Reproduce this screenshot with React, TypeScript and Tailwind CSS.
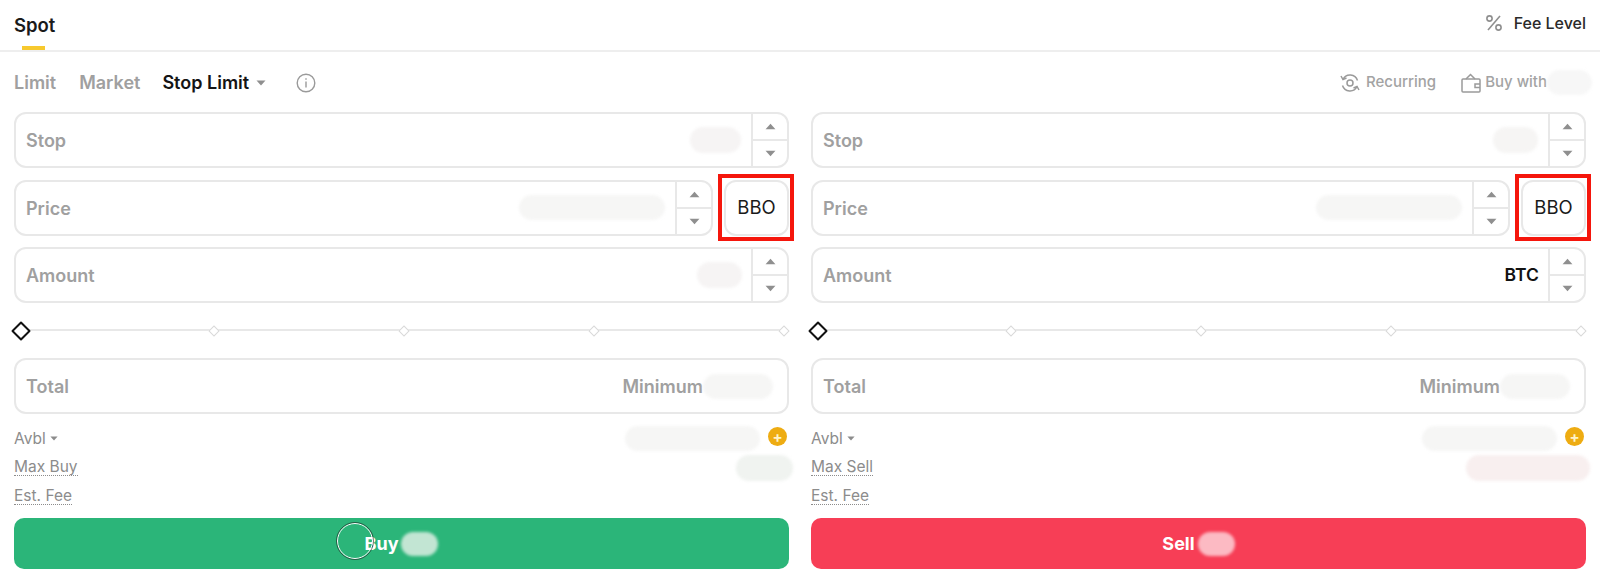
import { ReactNode } from "react";

type FieldProps = {
  label: string;
  suffix: ReactNode;
  stepper?: boolean;
};

function Blob({ className }: { className: string }) {
  return <span className={`block rounded-full blur-[1.5px] ${className}`} />;
}

function Caret({ className }: { className: string }) {
  return (
    <svg viewBox="0 0 10 6" className={className} fill="currentColor">
      <path d="M0.5 0.5h9L5 5.5z" />
    </svg>
  );
}

function Stepper() {
  return (
    <div className="flex w-[36px] shrink-0 flex-col self-stretch border-l-2 border-[#e8e8e8] text-[#8f8f8f]">
      <div className="flex flex-1 items-center justify-center border-b-2 border-[#e8e8e8]">
        <Caret className="h-[7px] w-[11px] rotate-180" />
      </div>
      <div className="flex flex-1 items-center justify-center">
        <Caret className="h-[7px] w-[11px]" />
      </div>
    </div>
  );
}

function Field({ label, suffix, stepper = true }: FieldProps) {
  return (
    <div className="flex h-[56px] w-full items-center rounded-[12px] border-2 border-[#e8e8e8] bg-white">
      <span className="pl-[10px] pt-[1px] text-[18px] font-semibold text-[#a0a0a0]">{label}</span>
      <div className="flex flex-1 items-center justify-end">{suffix}</div>
      {stepper && <Stepper />}
    </div>
  );
}

function BboButton() {
  return (
    <div className="relative ml-[11px] flex h-[56px] w-[65px] shrink-0 items-center justify-center rounded-[12px] border-2 border-[#e8e8e8] text-[18.5px] text-[#1a1a1a]">
      BBO
      <div className="absolute -top-[8px] -bottom-[7px] -left-[8px] -right-[7px] border-[4px] border-[#f5160c]" />
    </div>
  );
}

function Slider() {
  return (
    <div className="relative flex h-[55px] items-center justify-between pr-[1px]">
      <div className="absolute inset-x-[6px] top-[26px] h-[2px] bg-[#e8e8e8]" />
      <span className="relative h-[14px] w-[14px] rotate-45 rounded-[1px] border-2 border-[#111111] bg-white" />
      {[0, 1, 2, 3].map((i) => (
        <span key={i} className="relative h-[8px] w-[8px] rotate-45 border border-[#d9d9d9] bg-white" />
      ))}
    </div>
  );
}

function PlusBadge() {
  return (
    <span className="ml-[8px] -mt-[4px] flex h-[19px] w-[19px] shrink-0 items-center justify-center rounded-full bg-[#eeac12] text-[15px] leading-none font-bold text-[#fff3c9]">
      +
    </span>
  );
}

function OrderColumn({ side }: { side: "buy" | "sell" }) {
  const buy = side === "buy";
  return (
    <div className="relative w-[775px] shrink-0">
      <div className="flex flex-col gap-[11.5px]">
        <Field
          label="Stop"
          suffix={<Blob className={buy ? "mr-[10px] h-[26px] w-[51px] bg-[#f6f4f4]" : "mr-[10px] h-[26px] w-[45px] bg-[#f6f5f4]"} />}
        />
        <div className="flex">
          <div className="min-w-0 flex-1">
            <Field label="Price" suffix={<Blob className="mr-[10px] h-[25px] w-[146px] bg-[#f6f6f5]" />} />
          </div>
          <BboButton />
        </div>
        <Field
          label="Amount"
          suffix={
            buy ? (
              <Blob className="mr-[9px] h-[26px] w-[45px] bg-[#f6f4f4]" />
            ) : (
              <span className="mr-[9px] pt-[1px] text-[17.5px] font-semibold text-[#121212]">BTC</span>
            )
          }
        />
      </div>
      <Slider />
      <Field
        label="Total"
        stepper={false}
        suffix={
          <>
            <span className="pt-[1px] text-[18px] font-semibold text-[#a0a0a0]">Minimum</span>
            <Blob className="mr-[14px] h-[25px] w-[70px] bg-[#f6f6f5]" />
          </>
        }
      />
      <div className="mt-[11px] flex h-[27px] items-center justify-between text-[15.5px] text-[#8c8c8c]">
        <span className="flex items-center gap-[4px]">
          Avbl
          <Caret className="h-[5px] w-[8px]" />
        </span>
        <span className="flex items-center pr-[2px]">
          <Blob className="h-[25px] w-[135px] bg-[#f6f6f5]" />
          <PlusBadge />
        </span>
      </div>
      <div className="mt-[2px] flex h-[27px] items-center justify-between text-[15.5px] text-[#8c8c8c]">
        <span className="border-b border-dotted border-[#8c8c8c] leading-[16px]">{buy ? "Max Buy" : "Max Sell"}</span>
        <Blob className={buy ? "-mr-[4px] h-[26px] w-[57px] bg-[#f0f3f0]" : "-mr-[4px] h-[26px] w-[124px] bg-[#f8efef]"} />
      </div>
      <div className="mt-[2px] flex h-[27px] items-center text-[15.5px] text-[#8c8c8c]">
        <span className="border-b border-dotted border-[#8c8c8c] leading-[16px]">Est. Fee</span>
      </div>
      <button
        className={`relative mt-[8px] flex h-[51px] w-full items-center justify-center gap-[3px] rounded-[10px] text-[18px] font-bold text-white ${buy ? "bg-[#2bb579]" : "bg-[#f73e56]"}`}
      >
        {side === "buy" ? "Buy" : "Sell"}
        <Blob className={buy ? "h-[24px] w-[37px] bg-[#c2e5d3]" : "h-[24px] w-[37px] bg-[#fcbac3]"} />
        {buy && (
          <span className="absolute left-[323px] top-[5px] h-[36px] w-[36px] rounded-full border border-white outline outline-[#222222]/60" />
        )}
      </button>
    </div>
  );
}

export default function App() {
  return (
    <div className="h-[575px] w-[1600px] overflow-hidden bg-white font-['Inter','Open_Sans',sans-serif]">
      <div className="flex h-[52px] items-start justify-between border-b-2 border-[#eeeeee] px-[14px]">
        <div className="relative h-full">
          <span className="block pt-[14px] text-[18.5px] leading-[22px] font-semibold text-[#1a1a1a]">Spot</span>
          <span className="absolute bottom-0 left-[8px] h-[4px] w-[23px] bg-[#f7c92e]" />
        </div>
        <div className="flex items-center pt-[12px] text-[16px] leading-[22px] font-medium text-[#2a2a2a]">
          <svg viewBox="0 0 18 18" className="mr-[11px] h-[18px] w-[18px]" fill="none" stroke="#8f8f8f" strokeWidth="1.6">
            <path d="M15 2L3 16" />
            <circle cx="4.5" cy="4.5" r="2.6" />
            <circle cx="13.5" cy="13.5" r="2.6" />
          </svg>
          Fee Level
        </div>
      </div>

      <div className="flex h-[60px] items-center justify-between pl-[14px] pr-[14px] pt-[1px]">
        <div className="flex items-center text-[18px] font-semibold text-[#a0a0a0]">
          <span>Limit</span>
          <span className="ml-[23px]">Market</span>
          <span className="ml-[22px] text-[#141414]">Stop Limit</span>
          <Caret className="ml-[7px] h-[6px] w-[10px] text-[#8f8f8f]" />
          <svg viewBox="0 0 20 20" className="ml-[30px] h-[20px] w-[20px]" fill="none" stroke="#9a9a9a" strokeWidth="1.4">
            <circle cx="10" cy="10" r="8.800" />
            <path d="M10 8.500v6" />
            <path d="M10 5.200v1.600" />
          </svg>
        </div>
        <div className="flex items-center text-[15px] font-medium text-[#a3a3a3]">
          <svg viewBox="0 0 20 20" className="mr-[6px] h-[20px] w-[20px]" fill="none" stroke="#9a9a9a" strokeWidth="1.5">
            <circle cx="10" cy="10" r="3" />
            <path d="M3 6.500A7.800 7.800 0 0 1 17.500 7.500" />
            <path d="M17 13.500A7.800 7.800 0 0 1 2.500 12.500" />
            <path d="M1 3l2 3.500 3.500-1.500" />
            <path d="M19 17l-2-3.500-3.500 1.500" />
          </svg>
          Recurring
          <svg viewBox="0 0 20 20" className="ml-[25px] mr-[4px] h-[20px] w-[20px]" fill="none" stroke="#9a9a9a" strokeWidth="1.5">
            <rect x="1" y="6" width="18" height="13" rx="1" />
            <path d="M5 6l4.500-4.500L14 6" />
            <path d="M19 11h-5v3.500h5" />
          </svg>
          Buy with
          <Blob className="-mr-[6px] h-[25px] w-[45px] bg-[#f7f7f7]" />
        </div>
      </div>

      <div className="flex gap-[22px] px-[14px]">
        <OrderColumn side="buy" />
        <OrderColumn side="sell" />
      </div>
    </div>
  );
}
